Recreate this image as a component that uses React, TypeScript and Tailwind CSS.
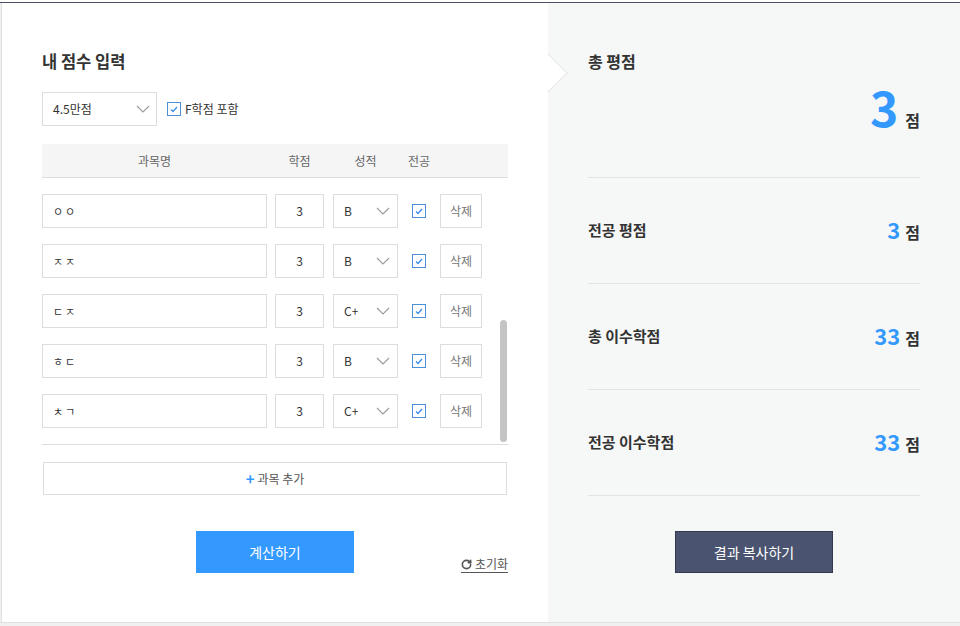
import { RotateCw } from 'lucide-react';

const rows = [
  { name: 'ㅇㅇ', credit: '3', grade: 'B' },
  { name: 'ㅈㅈ', credit: '3', grade: 'B' },
  { name: 'ㄷㅈ', credit: '3', grade: 'C+' },
  { name: 'ㅎㄷ', credit: '3', grade: 'B' },
  { name: 'ㅊㄱ', credit: '3', grade: 'C+' },
];

const summary = [
  { label: '전공 평점', value: '3' },
  { label: '총 이수학점', value: '33' },
  { label: '전공 이수학점', value: '33' },
];

function Chevron() {
  return (
    <svg width="14" height="8" viewBox="0 0 14 8" fill="none">
      <polyline points="1,1 7,7 13,1" stroke="#9a9a9a" strokeWidth="1.1" />
    </svg>
  );
}

function Check() {
  return (
    <span className="flex h-[14px] w-[14px] items-center justify-center border border-[#4a90d9] bg-white">
      <svg width="8" height="7" viewBox="0 0 8 7" fill="none">
        <polyline points="1,3.5 3,5.5 7,1" stroke="#3a8ee6" strokeWidth="1.3" />
      </svg>
    </span>
  );
}

export default function App() {
  return (
    <div
      className="h-[626px] w-full bg-[#f0f0f0] text-[#333]"
      style={{ fontFamily: '"Noto Sans CJK KR", "Noto Sans", sans-serif' }}
    >
      <div className="h-[2px] bg-white" />
      <div className="flex h-[621px] border-t border-b border-t-[#4a5064] border-b-[#e0e0e0]">
        {/* Input panel */}
        <div className="relative ml-px w-[547px] border-l border-[#e0e0e0] bg-white px-[40px] pt-[47px]">
          <div className="absolute -right-[14px] top-[56px] z-10 h-[28px] w-[28px] rotate-45 border-t border-r border-[#e6e6e6] bg-white" />

          <h1 className="text-[16.5px] font-bold leading-[22px]">내 점수 입력</h1>

          <div className="mt-[20px] flex items-center">
            <div className="flex h-[34px] w-[115px] items-center justify-between border border-[#ddd] pl-[10px] pr-[6px] text-[12px]">
              <span>4.5만점</span>
              <Chevron />
            </div>
            <label className="ml-[10px] flex items-center gap-[4px] text-[12px]">
              <Check />
              <span>F학점 포함</span>
            </label>
          </div>

          <div className="mt-[18px] flex h-[34px] items-center border-b border-[#ddd] bg-[#f5f5f5] text-[12px] text-[#666]">
            <div className="w-[225px] text-center">과목명</div>
            <div className="ml-[8px] w-[49px] text-center">학점</div>
            <div className="ml-[9px] w-[65px] text-center">성적</div>
            <div className="ml-[9px] w-[24px] text-center">전공</div>
          </div>

          <div className="relative flex flex-col gap-[16px] border-b border-[#ddd] py-[16px]">
            {rows.map((row, i) => (
              <div key={i} className="flex h-[34px] items-center text-[12px]">
                <div className="flex h-full w-[225px] items-center border border-[#ddd] pl-[10px] text-[11px] tracking-[2px]">
                  {row.name}
                </div>
                <div className="ml-[8px] flex h-full w-[49px] items-center justify-center border border-[#ddd]">
                  {row.credit}
                </div>
                <div className="ml-[9px] flex h-full w-[65px] items-center justify-between border border-[#ddd] pl-[10px] pr-[7px]">
                  <span>{row.grade}</span>
                  <Chevron />
                </div>
                <div className="ml-[14px]">
                  <Check />
                </div>
                <div className="ml-[14px] flex h-full w-[42px] items-center justify-center border border-[#ddd] text-[#777]">
                  삭제
                </div>
              </div>
            ))}
            <div className="absolute right-px top-[142px] h-[122px] w-[7px] rounded-full bg-[#c4c4c4]" />
          </div>

          <button className="mx-px mt-[17px] flex h-[33px] w-[464px] items-center justify-center gap-[3px] border border-[#ddd] bg-white text-[12px] text-[#555]">
            <span className="text-[15px] font-bold leading-none text-[#3399ff]">+</span>
            과목 추가
          </button>

          <div className="relative mt-[36px] flex justify-center">
            <button className="h-[42px] w-[158px] bg-[#3399ff] text-[14px] text-white">계산하기</button>
            <a className="absolute bottom-0 right-0 flex items-center gap-[3px] border-b border-[#555] pb-[1px] text-[12px] leading-[14px] text-[#555]">
              <RotateCw size={11} strokeWidth={3.5} className="text-[#555]" />
              초기화
            </a>
          </div>
        </div>

        {/* Result panel */}
        <div className="flex-1 bg-[#f6f7f7] px-[40px]">
          <div className="h-[175px] border-b border-[#e3e3e3] pt-[47px]">
            <h2 className="text-[16px] font-bold leading-[22px]">총 평점</h2>
            <div className="mt-[10px] flex items-baseline justify-end gap-[7px]">
              <span className="text-[48px] font-bold leading-none text-[#3399ff]">3</span>
              <span className="text-[16px] font-bold">점</span>
            </div>
          </div>

          {summary.map((item) => (
            <div
              key={item.label}
              className="flex h-[106px] items-center justify-between border-b border-[#e3e3e3]"
            >
              <span className="text-[15px] font-bold">{item.label}</span>
              <div className="flex items-baseline gap-[5px]">
                <span className="text-[22px] font-bold leading-none text-[#3399ff]">{item.value}</span>
                <span className="text-[16px] font-bold">점</span>
              </div>
            </div>
          ))}

          <div className="mt-[35px] flex justify-center">
            <button className="h-[42px] w-[158px] border border-[#333a4d] bg-[#4a5470] text-[14px] text-white">
              결과 복사하기
            </button>
          </div>
        </div>
      </div>
    </div>
  );
}
